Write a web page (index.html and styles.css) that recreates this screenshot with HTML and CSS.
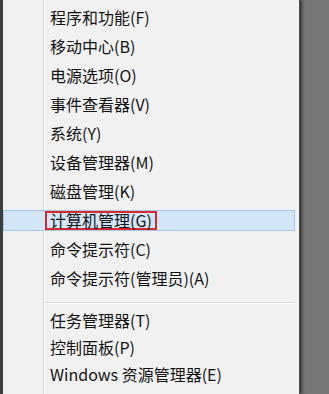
FILE: index.html
```html
<!DOCTYPE html>
<html lang="zh-CN">
<head>
<meta charset="utf-8">
<title>菜单</title>
<link rel="stylesheet" href="styles.css">
</head>
<body>
<div class="menu">
  <ul class="group group-top">
    <li class="item">程序和功能(F)</li>
    <li class="item">移动中心(B)</li>
    <li class="item">电源选项(O)</li>
    <li class="item">事件查看器(V)</li>
    <li class="item">系统(Y)</li>
    <li class="item">设备管理器(M)</li>
    <li class="item">磁盘管理(K)</li>
    <li class="item hover"><span class="mark">计算机管理(G)</span></li>
    <li class="item">命令提示符(C)</li>
    <li class="item">命令提示符(管理员)(A)</li>
  </ul>
  <div class="sep"></div>
  <ul class="group group-bottom">
    <li class="item">任务管理器(T)</li>
    <li class="item">控制面板(P)</li>
    <li class="item">Windows 资源管理器(E)</li>
  </ul>
</div>
</body>
</html>
```

FILE: styles.css
```css
html, body {
  margin: 0;
  padding: 0;
  height: 100%;
}
body {
  background: #777777;
  overflow: hidden;
  font-family: "Noto Sans CJK SC", "Noto Sans", sans-serif;
  font-size: 16px;
  color: #141414;
}
.menu {
  box-sizing: border-box;
  width: 299px;
  height: 394px;
  border-left: 3px solid #3e3e3e;
  background: linear-gradient(to right, #f1f1f1 40px, #d9d9d9 40px, #d9d9d9 41px, #ffffff 41px, #ffffff 42px, #f1f1f1 42px);
  box-shadow: 1px 0 0 #4e4e4e, 3px 0 3px rgba(0,0,0,0.6);
  padding-top: 7px;
  display: flex;
  flex-direction: column;
}
.group {
  list-style: none;
  margin: 0;
  padding: 0;
  display: flex;
  flex-direction: column;
}
.group-top { gap: 8px; }
.group-bottom { gap: 6px; margin-top: 6px; }
.item {
  box-sizing: border-box;
  height: 21px;
  line-height: 19px;
  margin-right: 4px;
  padding-left: 46px;
  border: 1px solid transparent;
  white-space: nowrap;
}
.item.hover {
  background: #d3e5f8;
  border-color: #a9c6e6;
  padding-left: 41px;
}
.mark {
  display: inline-block;
  box-sizing: border-box;
  height: 19px;
  line-height: 15px;
  padding: 0 3px;
  border: 2px solid #d42a30;
}
.sep {
  margin: 13px 4px 0 42px;
  height: 1px;
  background: #d5d5d5;
  border-bottom: 1px solid #ffffff;
}
```
